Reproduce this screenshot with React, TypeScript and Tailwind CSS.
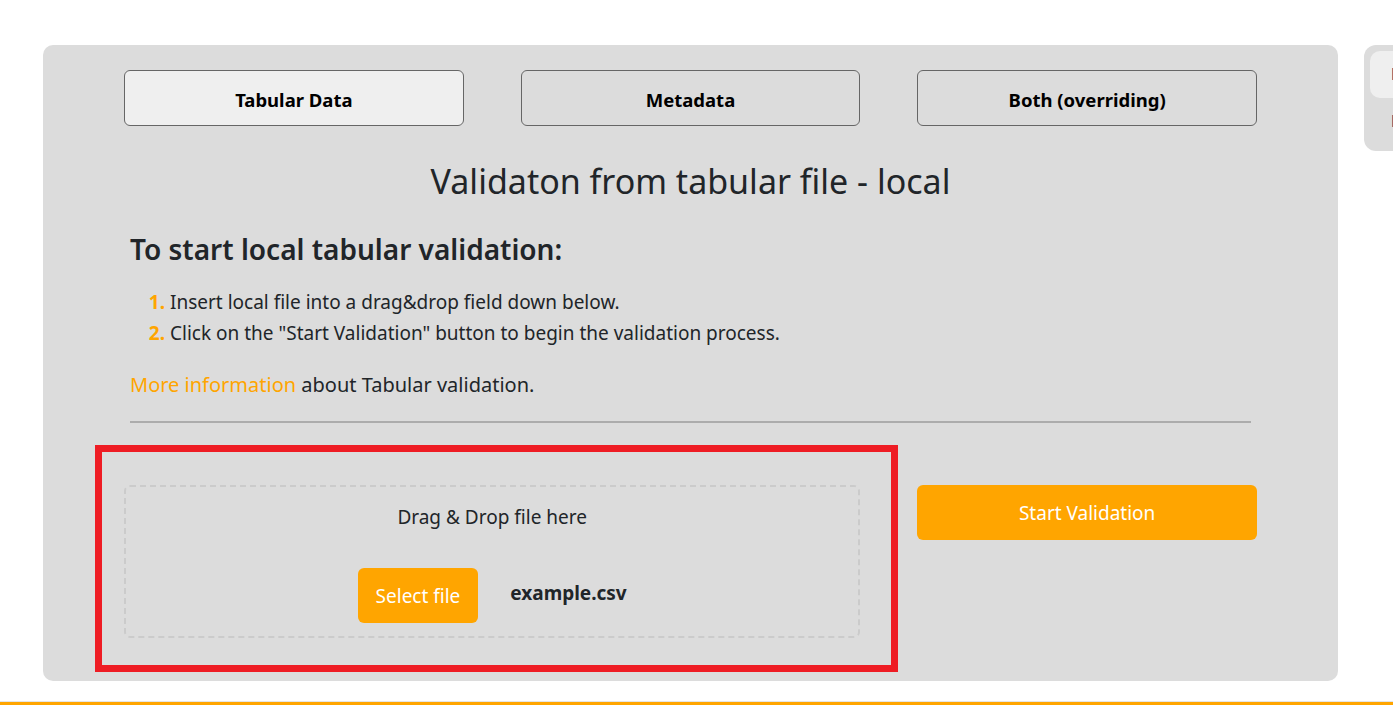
export default function App() {
  return (
    <div className="min-h-[705px] w-full overflow-hidden bg-white font-['Noto_Sans',sans-serif] text-[#212529]">
      <div className="flex items-start gap-[26px] pl-[43px] pt-[45px]">
        <div className="w-[1295px] shrink-0 rounded-[10px] bg-[#dcdcdc] px-[81px] pb-[43px] pt-[25px]">
          <div className="grid grid-cols-3 gap-x-[57px]">
            <button className="h-[56px] rounded-[6px] border border-[#666] bg-[#efefef] pt-[3px] text-[18.5px] font-bold text-black">
              Tabular Data
            </button>
            <button className="h-[56px] rounded-[6px] border border-[#666] pt-[3px] text-[18.5px] font-bold text-black">
              Metadata
            </button>
            <button className="h-[56px] rounded-[6px] border border-[#666] pt-[3px] text-[18.5px] font-bold text-black">
              Both (overriding)
            </button>
          </div>

          <h1 className="mt-[34px] text-center text-[34px] leading-[42px]">Validaton from tabular file - local</h1>

          <div className="px-[6px]">
            <h2 className="mt-[29px] text-[28px] font-semibold leading-[36px]">To start local tabular validation:</h2>
            <ol className="mt-[20px] list-decimal pl-[40px] text-[19px] leading-[31px] marker:font-bold marker:text-[#ffa500]">
              <li>Insert local file into a drag&amp;drop field down below.</li>
              <li>Click on the "Start Validation" button to begin the validation process.</li>
            </ol>
            <p className="mt-[20px] text-[20px] leading-[31px]">
              <a className="text-[#ffa500]">More information</a> about Tabular validation.
            </p>
            <hr className="mt-[21px] border-t-2 border-[#acacac]" />
          </div>

          <div className="mt-[62px] grid grid-cols-3 gap-x-[57px]">
            <div className="relative col-span-2">
              <div className="flex h-[153px] flex-col items-center rounded-[6px] border-2 border-dashed border-[#cbcbcb] pt-[16px]">
                <p className="text-[19px] leading-[28px]">Drag &amp; Drop file here</p>
                <div className="mt-[37px] flex items-center gap-[32px]">
                  <button className="h-[55px] rounded-[6px] bg-[#ffa500] px-[18px] pt-[2px] text-[19px] text-white">Select file</button>
                  <span className="-mt-[4px] text-[19px] font-bold">example.csv</span>
                </div>
              </div>
              <div className="pointer-events-none absolute -bottom-[34px] -left-[29px] -right-[38px] -top-[40px] border-[7px] border-[#ee1c24]" />
            </div>
            <div>
              <button className="h-[55px] w-full rounded-[6px] bg-[#ffa500] pt-[2px] text-[19px] text-white">Start Validation</button>
            </div>
          </div>
        </div>

        <div className="w-[240px] shrink-0 rounded-[12px] bg-[#dcdcdc] p-[6px]">
          <div className="rounded-[10px] bg-[#efefef] px-[21px] py-[11px] text-[16px] font-semibold leading-[25px] text-[#1c1c5a]">Local</div>
          <div className="px-[21px] py-[11px] text-[16px] font-semibold leading-[25px] text-[#1c1c5a]">Remote</div>
        </div>
      </div>
      <div className="mt-[20px] border-t border-[#e5e5e5]" />
      <div className="h-[4px] bg-[#ffa500]" />
    </div>
  );
}
